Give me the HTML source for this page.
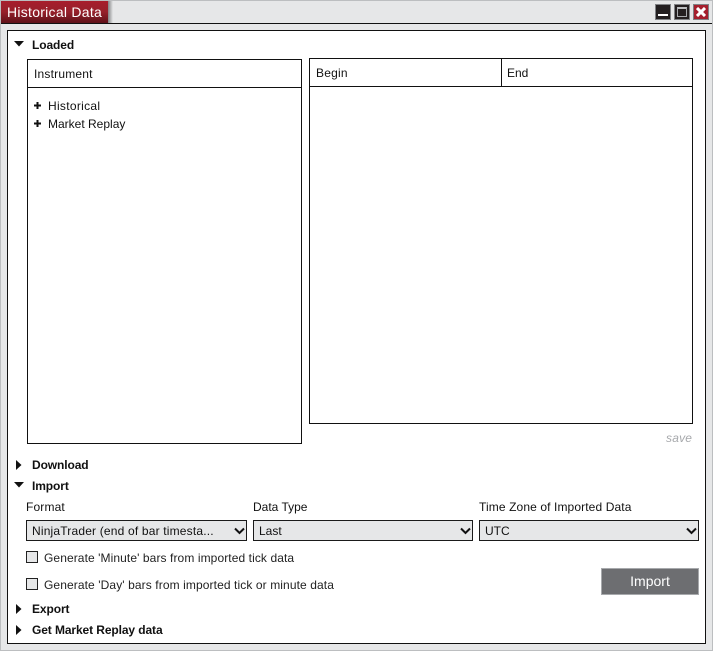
<!DOCTYPE html>
<html>
<head>
<meta charset="utf-8">
<style>
html,body{margin:0;padding:0;width:713px;height:651px;overflow:hidden;background:#e6e7e8}
body{position:relative;font-family:"Liberation Sans",sans-serif;font-size:12px;color:#111}
div,span,svg{position:absolute;box-sizing:border-box}
.t{white-space:nowrap;line-height:14px;height:14px}
.b{font-weight:bold;color:#111}
.sel{background:#e6e7e8;border:1px solid #1a1a1a;height:21px;top:520px}
.sel span{left:5px;top:3px;white-space:nowrap;line-height:14px}
.sel svg{top:6px}
.cb{left:26px;width:12px;height:12px;background:#e6e7e8;border:1px solid #222}
.box{background:#fff;border:1px solid #111}
</style>
</head>
<body>
<div style="left:0;top:0;width:713px;height:1px;background:#bcbec0"></div>
<div style="left:0;top:0;width:1px;height:651px;background:#bcbec0"></div>
<div style="left:712px;top:0;width:1px;height:651px;background:#bcbec0"></div>
<div style="left:0;top:650px;width:713px;height:1px;background:#bcbec0"></div>
<div style="left:1px;top:23px;width:711px;height:1px;background:#111"></div>

<div style="left:108px;top:1px;width:5px;height:22px;background:linear-gradient(90deg,#828385,#e6e7e8)"></div>
<div style="left:1px;top:1px;width:107px;height:22px;background:linear-gradient(180deg,#a81e2c 0%,#96202b 50%,#5f1119 100%)"></div>
<div class="t" style="left:7px;top:4px;color:#fff;font-size:14px;line-height:16px;height:16px;letter-spacing:.27px">Historical Data</div>

<div style="left:655px;top:4px;width:16px;height:16px;background:#231f20;border:1px solid #808285"></div>
<div style="left:658px;top:14px;width:10px;height:2px;background:#fff"></div>
<div style="left:674px;top:4px;width:16px;height:16px;background:#231f20;border:1px solid #808285"></div>
<div style="left:677px;top:7px;width:10px;height:10px;border:1px solid #a7a9ac;border-top:2px solid #bcbec0"></div>
<div style="left:693px;top:4px;width:16px;height:16px;background:#a51f2d;border:1px solid #808285"></div>
<svg style="left:696px;top:7px" width="10" height="10" viewBox="0 0 10 10"><path d="M1 1L9 9M9 1L1 9" stroke="#fff" stroke-width="3" fill="none"/></svg>

<div style="left:7px;top:30px;width:699px;height:614px;background:#fff;border:1px solid #111"></div>

<svg style="left:14px;top:41px" width="10" height="6" viewBox="0 0 10 6"><path d="M0 0H10L5 5.5Z" fill="#111"/></svg>
<div class="t b" style="left:32px;top:38px;letter-spacing:-.1px">Loaded</div>

<div class="box" style="left:27px;top:59px;width:275px;height:385px"></div>
<div style="left:28px;top:87px;width:273px;height:1px;background:#111"></div>
<div class="t" style="left:34px;top:67px;letter-spacing:.2px">Instrument</div>

<div class="box" style="left:309px;top:58px;width:384px;height:366px"></div>
<div style="left:310px;top:86px;width:382px;height:1px;background:#111"></div>
<div style="left:501px;top:59px;width:1px;height:27px;background:#111"></div>
<div class="t" style="left:316px;top:66px;letter-spacing:.2px">Begin</div>
<div class="t" style="left:507px;top:66px">End</div>

<svg style="left:34px;top:102px" width="7" height="7" viewBox="0 0 7 7"><path d="M0 3.5H7M3.5 0V7" stroke="#111" stroke-width="2" fill="none"/></svg>
<div class="t" style="left:48px;top:99px;letter-spacing:.3px">Historical</div>
<svg style="left:34px;top:120px" width="7" height="7" viewBox="0 0 7 7"><path d="M0 3.5H7M3.5 0V7" stroke="#111" stroke-width="2" fill="none"/></svg>
<div class="t" style="left:48px;top:117px">Market Replay</div>

<div class="t" style="left:666px;top:431px;color:#a7a9ac;font-style:italic;letter-spacing:.2px">save</div>

<svg style="left:16px;top:460px" width="6" height="10" viewBox="0 0 6 10"><path d="M0 0V10L5.5 5Z" fill="#111"/></svg>
<div class="t b" style="left:32px;top:458px;letter-spacing:-.1px">Download</div>

<svg style="left:14px;top:482px" width="10" height="6" viewBox="0 0 10 6"><path d="M0 0H10L5 5.5Z" fill="#111"/></svg>
<div class="t b" style="left:32px;top:479px;letter-spacing:-.1px">Import</div>

<div class="t" style="left:26px;top:500px;letter-spacing:.15px">Format</div>
<div class="t" style="left:253px;top:500px">Data Type</div>
<div class="t" style="left:479px;top:500px;letter-spacing:.11px">Time Zone of Imported Data</div>

<div class="sel" style="left:26px;width:221px"><span style="letter-spacing:.18px">NinjaTrader (end of bar timesta...</span><svg style="left:207px" width="11" height="8" viewBox="0 0 11 8"><path d="M1 1.5L5.5 6L10 1.5" stroke="#111" stroke-width="2" fill="none"/></svg></div>
<div class="sel" style="left:253px;width:220px"><span>Last</span><svg style="left:206px" width="11" height="8" viewBox="0 0 11 8"><path d="M1 1.5L5.5 6L10 1.5" stroke="#111" stroke-width="2" fill="none"/></svg></div>
<div class="sel" style="left:479px;width:220px"><span>UTC</span><svg style="left:206px" width="11" height="8" viewBox="0 0 11 8"><path d="M1 1.5L5.5 6L10 1.5" stroke="#111" stroke-width="2" fill="none"/></svg></div>

<div class="cb" style="top:551px"></div>
<div class="t" style="left:44px;top:551px;color:#222;letter-spacing:.09px">Generate 'Minute' bars from imported tick data</div>
<div class="cb" style="top:578px"></div>
<div class="t" style="left:44px;top:578px;color:#222;letter-spacing:.1px">Generate 'Day' bars from imported tick or minute data</div>

<div style="left:601px;top:568px;width:98px;height:27px;background:#6d6e71;border:1px solid #a7a9ac;color:#fff;font-size:14px;line-height:25px;text-align:center">Import</div>

<svg style="left:16px;top:604px" width="6" height="10" viewBox="0 0 6 10"><path d="M0 0V10L5.5 5Z" fill="#111"/></svg>
<div class="t b" style="left:32px;top:602px;letter-spacing:-.1px">Export</div>
<svg style="left:16px;top:625px" width="6" height="10" viewBox="0 0 6 10"><path d="M0 0V10L5.5 5Z" fill="#111"/></svg>
<div class="t b" style="left:32px;top:623px;letter-spacing:-.1px">Get Market Replay data</div>
</body>
</html>
